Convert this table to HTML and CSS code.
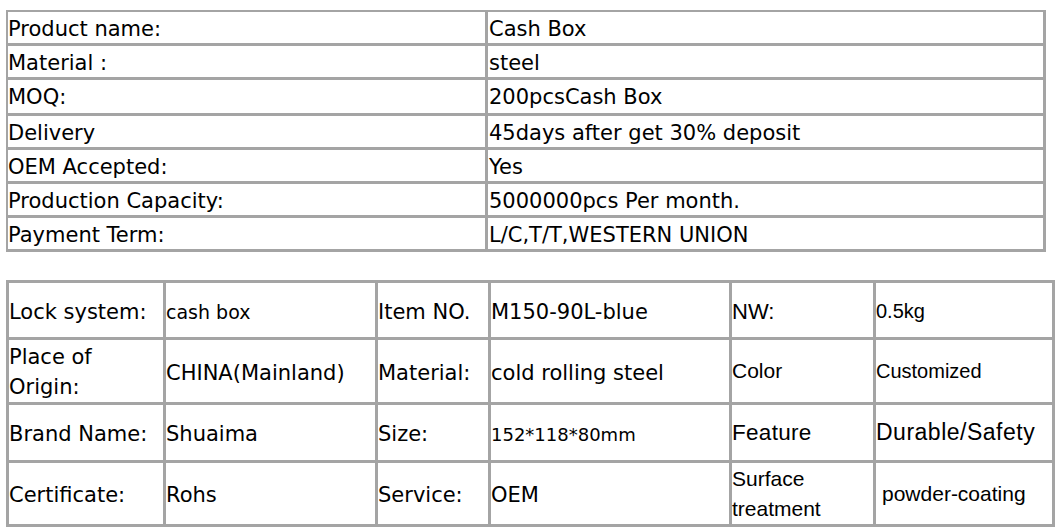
FILE: index.html
```html
<!DOCTYPE html>
<html lang="en">
<head>
<meta charset="utf-8">
<title>Cash Box specification</title>
<link rel="stylesheet" href="styles.css">
</head>
<body>
<table class="spec">
  <tr><td class="k">Product name:</td><td class="v">Cash Box</td></tr>
  <tr><td>Material :</td><td class="v">steel</td></tr>
  <tr class="tall"><td>MOQ:</td><td class="v">200pcsCash Box</td></tr>
  <tr><td>Delivery</td><td class="v">45days after get 30% deposit</td></tr>
  <tr><td>OEM Accepted:</td><td class="v">Yes</td></tr>
  <tr><td>Production Capacity:</td><td class="v">5000000pcs Per month.</td></tr>
  <tr><td>Payment Term:</td><td class="v">L/C,T/T,WESTERN UNION</td></tr>
</table>
<table class="grid">
  <tr class="r1">
    <td class="c1">Lock system:</td>
    <td class="c2 small">cash box</td>
    <td class="c3">Item NO.</td>
    <td class="c4">M150-90L-blue</td>
    <td class="c5 ar22 nudge">NW:</td>
    <td class="c6 ar20 nudge">0.5kg</td>
  </tr>
  <tr class="r2">
    <td class="two">Place of<br>Origin:</td>
    <td>CHINA(Mainland)</td>
    <td>Material:</td>
    <td>cold rolling steel</td>
    <td class="ar21">Color</td>
    <td class="ar20">Customized</td>
  </tr>
  <tr class="r3">
    <td>Brand Name:</td>
    <td>Shuaima</td>
    <td>Size:</td>
    <td class="small size">152*118*80mm</td>
    <td class="ar23">Feature</td>
    <td class="ar23 wide">Durable/Safety</td>
  </tr>
  <tr class="r4">
    <td>Certificate:</td>
    <td>Rohs</td>
    <td>Service:</td>
    <td>OEM</td>
    <td class="ar21">Surface<br>treatment</td>
    <td class="ar21 indent">powder-coating</td>
  </tr>
</table>
</body>
</html>
```
FILE: styles.css
```css
body {
  margin: 0;
  background: #ffffff;
  color: #000000;
  font-family: "DejaVu Sans", Verdana, sans-serif;
}

table {
  border-collapse: separate;
  border-spacing: 0;
  table-layout: fixed;
}

td {
  box-sizing: border-box;
  padding: 0;
  border-right: 3px solid #a4a4a4;
  border-bottom: 3px solid #a4a4a4;
  white-space: nowrap;
}

.spec {
  margin: 10px 0 0 6px;
  width: 1040px;
  border-top: 2px solid #a4a4a4;
  border-left: 2px solid #a4a4a4;
  font-size: 21px;
}

.spec td {
  height: 34px;
  padding-top: 4px;
  line-height: 27px;
  vertical-align: top;
}

.spec .tall td { height: 36px; }

.spec .k { width: 480px; }
.spec .v { width: 558px; padding-left: 1px; }

.grid {
  margin: 28px 0 0 6px;
  width: 1049px;
  border-top: 3px solid #a4a4a4;
  border-left: 3px solid #a4a4a4;
  font-size: 21px;
}

.grid td {
  padding-top: 4px;
  line-height: 31px;
  vertical-align: middle;
}

.grid .c1 { width: 157px; }
.grid .c2 { width: 212px; }
.grid .c3 { width: 113px; }
.grid .c4 { width: 241px; }
.grid .c5 { width: 144px; }
.grid .c6 { width: 179px; }

.grid .r1 td { height: 57px; }
.grid .r2 td { height: 65px; }
.grid .r3 td { height: 58px; }
.grid .r4 td { height: 64px; }

.grid .two { padding-top: 2px; line-height: 30px; }

.grid .small { font-size: 19px; }
.grid .size { font-size: 18px; }

.grid .ar20,
.grid .ar21,
.grid .ar22,
.grid .ar23 {
  font-family: "Liberation Sans", Arial, sans-serif;
  padding-top: 0;
}
.grid .ar20 { font-size: 20px; }
.grid .ar21 { font-size: 21px; line-height: 30px; }
.grid .ar22 { font-size: 22px; }
.grid .ar23 { font-size: 22.5px; letter-spacing: 0.3px; }
.grid .wide { font-size: 23px; letter-spacing: 0.5px; }

.grid .nudge { padding-top: 2px; }
.grid .indent { padding-left: 6px; }
```
